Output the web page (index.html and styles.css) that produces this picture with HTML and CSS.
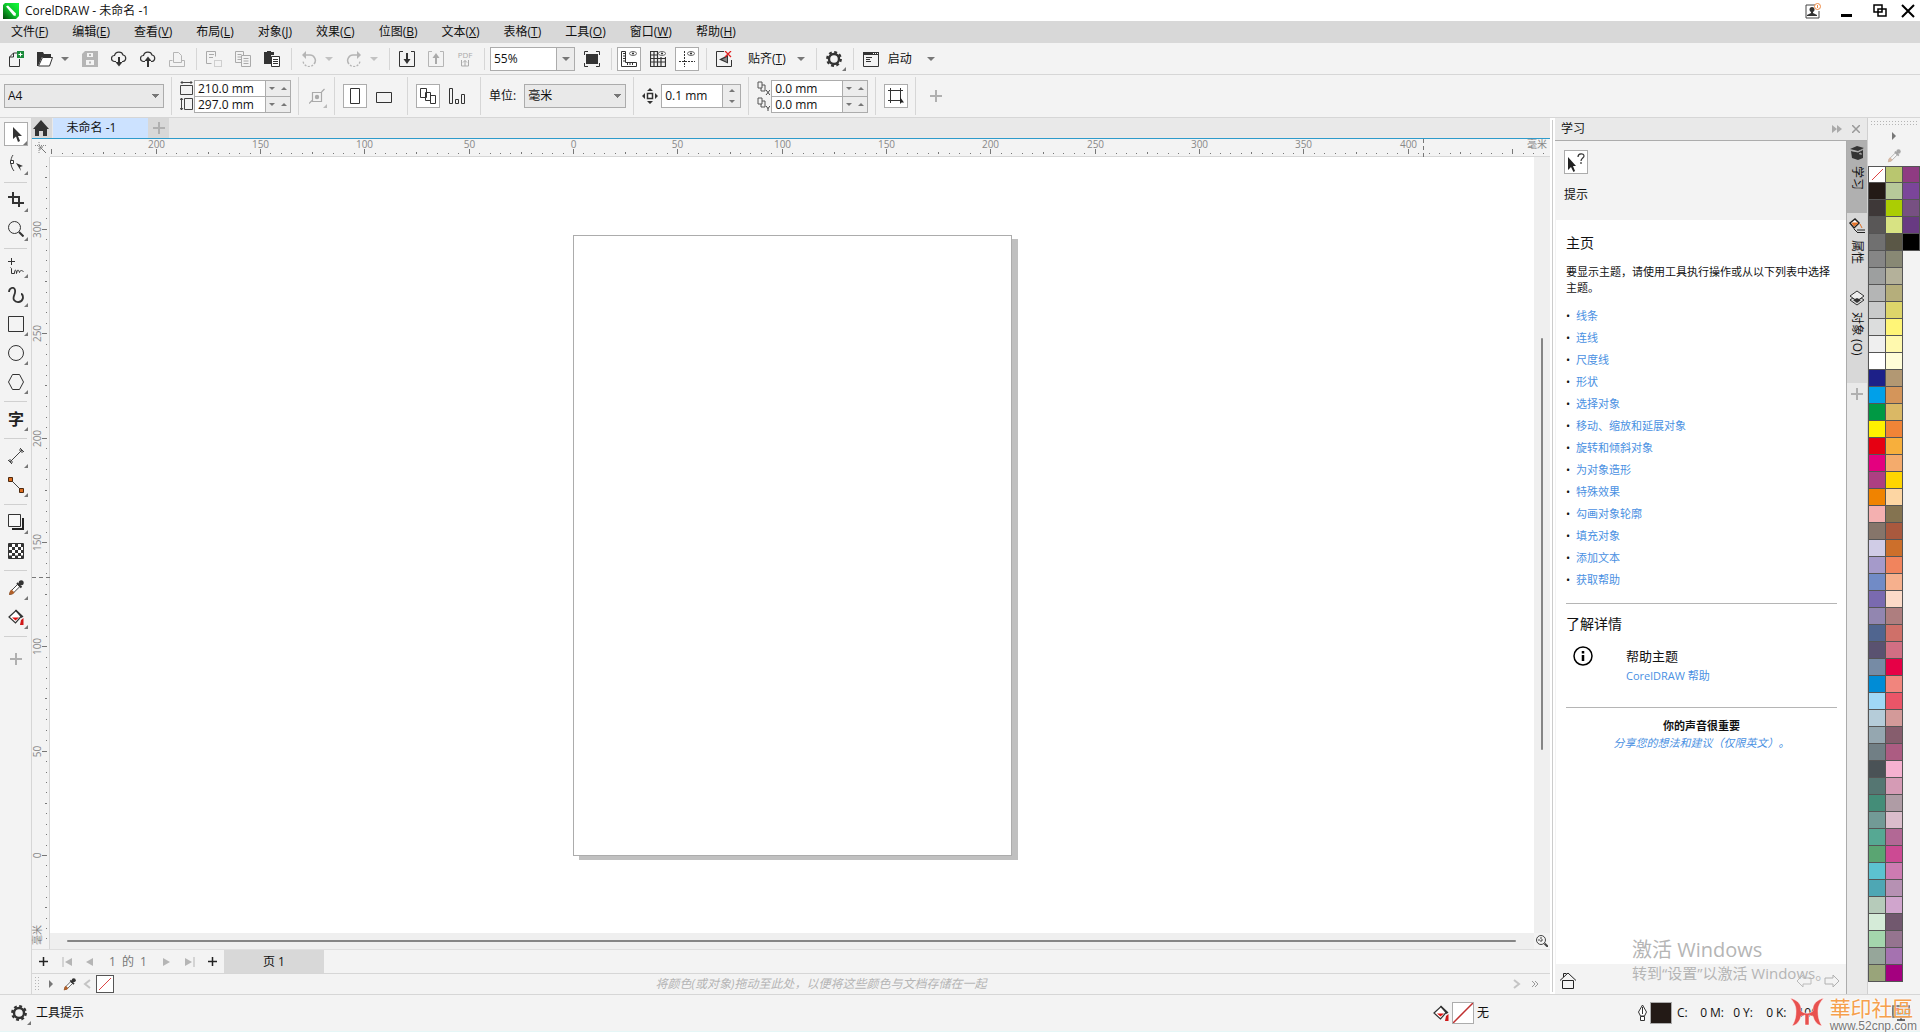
FILE: index.html
```html
<!DOCTYPE html>
<html lang="zh-CN">
<head>
  <meta charset="UTF-8">
  <title>CorelDRAW - 未命名 -1</title>
  <link rel="stylesheet" href="styles.css">
</head>
<body>

  <!-- shared icons -->
  <svg class="sprite" aria-hidden="true">
    <defs>
      <linearGradient id="logoFill" x1="1" y1="0" x2="0" y2="1">
        <stop offset="0" stop-color="#10ff3a"/><stop offset=".5" stop-color="#0fc22c"/><stop offset="1" stop-color="#02470c"/>
      </linearGradient>
      <symbol id="i-down" viewBox="0 0 8 4"><path d="M0 0h8L4 4z" fill="currentColor"/></symbol>
      <symbol id="i-up" viewBox="0 0 8 4"><path d="M0 4h8L4 0z" fill="currentColor"/></symbol>
      <symbol id="i-play" viewBox="0 0 8 10"><path d="M0 0l8 5-8 5z" fill="currentColor"/></symbol>
      <symbol id="i-plus" viewBox="0 0 12 12"><path d="M6 0v12M0 6h12" stroke="currentColor" stroke-width="2"/></symbol>
      <symbol id="i-gear" viewBox="0 0 16 16">
        <circle cx="8" cy="8" r="5" fill="none" stroke="#333" stroke-width="2.4"/>
        <circle cx="8" cy="8" r="6.8" fill="none" stroke="#333" stroke-width="2.2" stroke-dasharray="2.9 2.44"/>
      </symbol>
      <symbol id="i-bucket" viewBox="0 0 16 16">
        <path d="M1 8l7-6.500 5.500 5.500-6 7z" fill="#fff" stroke="#333" stroke-width="1.200"/>
        <path d="M7 1.500l1-1 7.500 7-2 1.500z" fill="#333"/>
        <path d="M4 8.500h7l-3.500 3z" fill="#e01010"/><path d="M13 11l2.500-2V16h-3.500z" fill="#d01818"/>
      </symbol>
      <symbol id="i-dropper" viewBox="0 0 16 16">
        <path d="M1.500 14.500l1-3 7-7 2.200 2.200-7 7z" fill="#fff" stroke="#444"/>
        <path d="M1 15l1-4 1.500-1.500 3 3L5 14z" fill="#b0602a"/>
        <path d="M9 3l4.500 4.500M11 5l2.500-2.500" stroke="#333" stroke-width="2"/><circle cx="13.200" cy="2.800" r="2.500" fill="#333"/>
      </symbol>
      <symbol id="i-eye" viewBox="0 0 8 5"><ellipse cx="4" cy="2.500" rx="3.500" ry="2" fill="#fff" stroke="#444" stroke-width=".8"/><circle cx="4" cy="2.500" r="1.100" fill="#333"/></symbol>
      <symbol id="i-duplicate" viewBox="0 0 13 13"><path d="M1 1h4v6H1zM5 4h3v6H4V7" fill="none" stroke="#555"/></symbol>
    </defs>
  </svg>

  <header class="titlebar">
    <svg class="logo" viewBox="0 0 16 16"><path d="M2 0h14v13l-3 3H0V2z" fill="url(#logoFill)"/><path d="M3 3.500l2-1 8 8-.5 2.500-2-.5z" fill="#fff"/></svg>
    <h1>CorelDRAW - 未命名 -1</h1>
    <div class="window-buttons">
      <button aria-label="帐户"><svg width="16" height="16"><path d="M1 2h9M1 2v13h13V8" fill="none" stroke="#444"/><circle cx="7" cy="6.500" r="2.500" fill="#333"/><path d="M6 8h2v2l4 2v1H2v-1l4-2z" fill="#333"/><circle cx="12.500" cy="3.500" r="3" fill="#fff" stroke="#ee8a45"/><path d="M12.500 2v3" stroke="#ee8a45"/></svg></button>
      <button aria-label="最小化"><svg width="12" height="14"><path d="M0 10h11v3H0z"/></svg></button>
      <button aria-label="还原"><svg width="14" height="14"><path d="M1 1h8v7H1zM5 5h8v7H5z" fill="#fff" stroke="#000" stroke-width="1.500"/></svg></button>
      <button class="close" aria-label="关闭"><svg width="14" height="14"><path d="M1 1l12 12M13 1L1 13" stroke="#000" stroke-width="2"/></svg></button>
    </div>
  </header>

  <nav class="menubar">
    <button>文件(<u>F</u>)</button>
    <button>编辑(<u>E</u>)</button>
    <button>查看(<u>V</u>)</button>
    <button>布局(<u>L</u>)</button>
    <button>对象(<u>J</u>)</button>
    <button>效果(<u>C</u>)</button>
    <button>位图(<u>B</u>)</button>
    <button>文本(<u>X</u>)</button>
    <button>表格(<u>T</u>)</button>
    <button>工具(<u>O</u>)</button>
    <button>窗口(<u>W</u>)</button>
    <button>帮助(<u>H</u>)</button>
  </nav>

  <div class="toolbar">
    <button class="tool" aria-label="新建"><svg viewBox="0 0 16 16"><path d="M9.500 2H5.500L1.500 6v9.500h10V8M5.500 2v4h-4" fill="none" stroke="#333"/><path d="M9 0h7v7H9z" fill="#1a8a3a"/><path d="M12.500 1.500v4M10.500 3.500h4" stroke="#fff"/></svg></button>
    <div class="split">
      <button class="tool" aria-label="打开"><svg viewBox="0 0 16 16"><path d="M0 1h6l1 2h7v3H5L1 15H0z" fill="#333"/><path d="M5.500 6.500h10l-3 8.500h-11z" fill="#fff" stroke="#333"/></svg></button>
      <button class="caret" aria-label="最近文件"><svg><use href="#i-down"/></svg></button>
    </div>
    <button class="tool" aria-label="保存" disabled><svg viewBox="0 0 16 16"><path d="M0 3l3-3h13v16H0z" fill="#b5b5b5"/><path d="M5 2h6v4H5zM4 9h8v5H4z" fill="#f3f3f3"/><path d="M8 3v2M8 10.500v2" stroke="#b5b5b5" stroke-width="2"/></svg></button>
    <button class="tool" aria-label="从云端下载"><svg viewBox="0 0 16 16"><path d="M5 10.500H3.500a3 3 0 010-6C4.500 0 11 0 12 4a3.300 3.300 0 010 6.500h-1" fill="none" stroke="#333" stroke-width="1.200"/><path d="M8 6v6" stroke="#333" stroke-width="2"/><path d="M4.500 11h7L8 15.500z" fill="#333"/></svg></button>
    <button class="tool" aria-label="上传到云端"><svg viewBox="0 0 16 16"><path d="M5 10.500H3.500a3 3 0 010-6C4.500 0 11 0 12 4a3.300 3.300 0 010 6.500h-1" fill="none" stroke="#333" stroke-width="1.200"/><path d="M8 9v7" stroke="#333" stroke-width="2"/><path d="M4.500 10h7L8 5.500z" fill="#333"/></svg></button>
    <button class="tool" aria-label="打印" disabled><svg viewBox="0 0 16 16"><path d="M3.500 9.500H.5v6h15v-6h-3M4.500 11.500v-10h5l3 3v7z" fill="none" stroke="#b5b5b5"/></svg></button>
    <span class="sep"></span>
    <button class="tool" aria-label="剪切" disabled><svg viewBox="0 0 16 16"><path d="M.5 .5h9v5M.5 .5v12h5M3 3.500h5M3 6.500h4" fill="none" stroke="#aaa"/><path d="M8.500 9.500h7v6h-7z" fill="none" stroke="#aaa" stroke-dasharray="1 1"/></svg></button>
    <button class="tool" aria-label="复制" disabled><svg viewBox="0 0 16 16"><path d="M6 11.500H.5V.5h8V4M2.500 3.500h4M2.500 6h4M2.500 8.500h4M6.500 4.500h9v11h-9zM8.500 7.500h5M8.500 10h5M8.500 12.500h5" fill="none" stroke="#aaa"/></svg></button>
    <button class="tool" aria-label="粘贴"><svg viewBox="0 0 16 16"><path d="M0 1h3V0h4v1h3v3H7v9H0z" fill="#333"/><path d="M7.500 5.500h8v10h-8z" fill="#fff" stroke="#333"/><path d="M9 8.500h5M9 10.500h5M9 12.500h5" stroke="#333"/></svg></button>
    <span class="sep"></span>
    <div class="split">
      <button class="tool" aria-label="撤消" disabled><svg viewBox="0 0 16 16"><path d="M3 4h5a5.500 5.500 0 015 9" fill="none" stroke="#b5b5b5" stroke-width="1.500"/><path d="M5 0v8L1 4z" fill="#b5b5b5"/><path d="M12 14a6 6 0 01-10-4" fill="none" stroke="#b5b5b5" stroke-width="1.300" stroke-dasharray="2 1.500"/></svg></button>
      <button class="caret" aria-label="撤消列表" disabled><svg><use href="#i-down"/></svg></button>
    </div>
    <div class="split">
      <button class="tool" aria-label="重做" disabled><svg viewBox="0 0 16 16"><path d="M13 4H8a5.500 5.500 0 00-5 9" fill="none" stroke="#b5b5b5" stroke-width="1.500"/><path d="M11 0v8l4-4z" fill="#b5b5b5"/><path d="M4 14a6 6 0 0010-4" fill="none" stroke="#b5b5b5" stroke-width="1.300" stroke-dasharray="2 1.500"/></svg></button>
      <button class="caret" aria-label="重做列表" disabled><svg><use href="#i-down"/></svg></button>
    </div>
    <span class="sep"></span>
    <button class="tool" aria-label="导入"><svg viewBox="0 0 16 16"><path d="M4 .5H.5v15h15V.5H12" fill="none" stroke="#333"/><path d="M8 2v7" stroke="#333" stroke-width="2"/><path d="M4.500 8h7L8 13z" fill="#333"/></svg></button>
    <button class="tool" aria-label="导出" disabled><svg viewBox="0 0 16 16"><path d="M4 .5H.5v15h15V.5H12" fill="none" stroke="#b5b5b5"/><path d="M8 6v7" stroke="#aaa" stroke-width="2"/><path d="M4.500 7h7L8 2z" fill="#aaa"/></svg></button>
    <button class="tool tool-pdf" aria-label="发布为 PDF" disabled><span>PDF</span><svg viewBox="0 0 16 8"><path d="M4.500 1v6h7V1M8 7V1.500M6 3.500l2-2 2 2" fill="none" stroke="#aaa"/></svg></button>
    <span class="sep"></span>
    <div class="combo zoom-level">
      <input type="text" value="55%" aria-label="缩放级别">
      <button aria-label="选择缩放级别"><svg><use href="#i-down"/></svg></button>
    </div>
    <button class="tool" aria-label="全屏预览"><svg viewBox="0 0 16 16"><path d="M2 3h12v10H2z" fill="#333"/><path d="M.5 4V.5H4M12 .5h3.500V4M15.500 12v3.500H12M4 15.500H.5V12" fill="none" stroke="#333"/></svg></button>
    <span class="sep"></span>
    <button class="tool on" aria-label="显示标尺"><svg viewBox="0 0 16 16"><path d="M.5 .5h4v11h11v4H.5z" fill="#fff" stroke="#333"/><path d="M2 2.500h2M2 5h2M2 7.500h2M2 10h2M6.500 12v2M9 12v2M11.500 12v2" stroke="#333"/><use href="#i-eye" x="8" y="0" width="8" height="5"/></svg></button>
    <button class="tool" aria-label="显示网格"><svg viewBox="0 0 16 16"><path d="M.5 0v16M4 0v16M7.500 0v16M11 6v10M15.500 6v10M0 .5h8M0 4h8M0 7.500h16M0 11h16M0 15.500h16" stroke="#333" stroke-width="1.200"/><use href="#i-eye" x="8" y="0" width="8" height="5"/></svg></button>
    <button class="tool on" aria-label="显示辅助线"><svg viewBox="0 0 16 16"><path d="M5.500 0v16M0 10.500h16" stroke="#333" stroke-dasharray="2 1"/><use href="#i-eye" x="8" y="0" width="8" height="5"/></svg></button>
    <span class="sep"></span>
    <button class="tool" aria-label="贴齐关闭"><svg viewBox="0 0 16 16"><path d="M8 .5H.5v15h15V9" fill="none" stroke="#333"/><path d="M12 4L3 8.500l9 4z" fill="#333"/><path d="M6 8.500l5-2.500v5z" fill="#888"/><path d="M9 0l6 6M15 0L9 6" stroke="#e02020" stroke-width="1.300"/></svg></button>
    <div class="split">
      <button class="text-button">贴齐(<u>T</u>)</button>
      <button class="caret" aria-label="贴齐选项"><svg><use href="#i-down"/></svg></button>
    </div>
    <span class="sep"></span>
    <button class="tool flyout" aria-label="选项"><svg><use href="#i-gear"/></svg></button>
    <span class="sep"></span>
    <button class="tool" aria-label="启动图标"><svg viewBox="0 0 16 16"><path d="M.5 1.500h15v14H.5z" fill="none" stroke="#333"/><path d="M0 1h16v3H0z" fill="#333"/><path d="M10 2.500h1M12 2.500h1M14 2.500h1" stroke="#fff"/><path d="M3 6.500h6M3 8.500h4M3 10.500h5" stroke="#333"/></svg></button>
    <div class="split launch">
      <button>启动</button>
      <button class="caret" aria-label="应用程序启动器"><svg><use href="#i-down"/></svg></button>
    </div>
  </div>

  <div class="toolbar property-bar">
    <select class="page-size" aria-label="页面大小"><option>A4</option></select>
    <span class="sep"></span>
    <div class="pair">
      <div class="pair-icons">
        <svg width="13" height="16"><path d="M.5 5.500h12v9H.5zM1 2.500h11M2.500 1L1 2.500 2.500 4M10.500 1L12 2.500 10.500 4" fill="none" stroke="#444"/></svg>
        <svg width="13" height="16"><path d="M4.500 2.500h8v11h-8zM1.500 2v12M0 4l1.500-2L3 4M0 12l1.500 2L3 12" fill="none" stroke="#444"/></svg>
      </div>
      <div class="pair-fields">
        <div class="combo"><input type="text" value="210.0 mm" aria-label="页面宽度"><button aria-label="减小宽度"><svg><use href="#i-down"/></svg></button><button aria-label="增大宽度"><svg><use href="#i-up"/></svg></button></div>
        <div class="combo"><input type="text" value="297.0 mm" aria-label="页面高度"><button aria-label="减小高度"><svg><use href="#i-down"/></svg></button><button aria-label="增大高度"><svg><use href="#i-up"/></svg></button></div>
      </div>
    </div>
    <span class="sep"></span>
    <button class="tool narrow flyout" aria-label="自动适合页面" disabled><svg viewBox="0 0 16 16"><path d="M3.500 4.500h9v9h-9zM0 15.500l3-3M12.500 4l3-3" fill="none" stroke="#aaa" stroke-width="1.200"/><circle cx="8" cy="9" r="2.200" fill="#aaa"/></svg></button>
    <span class="sep"></span>
    <div class="group">
      <button class="tool on" aria-label="纵向"><svg viewBox="0 0 16 16"><path d="M3.500 .5h9v15h-9z" fill="#fff" stroke="#333"/></svg></button>
      <button class="tool" aria-label="横向"><svg viewBox="0 0 16 16"><path d="M.5 4.500h15v10H.5z" fill="none" stroke="#333"/></svg></button>
    </div>
    <span class="sep"></span>
    <div class="group">
      <button class="tool on" aria-label="所有页面"><svg viewBox="0 0 16 16"><path d="M.5 .5h6v9h-6zM5.500 4.500h5v8h-5zM10.500 7.500h5v8h-5z" fill="#fff" stroke="#333"/></svg></button>
      <button class="tool" aria-label="当前页面"><svg viewBox="0 0 16 16"><path d="M.5 .5h3v15h-3zM6.500 11.500h3v4h-3zM12.500 6.500h3v9h-3z" fill="none" stroke="#333"/></svg></button>
    </div>
    <span class="sep"></span>
    <label class="unit-label" for="units">单位:</label>
    <select class="units" id="units"><option>毫米</option></select>
    <span class="sep"></span>
    <div class="nudge">
      <svg width="16" height="16"><path d="M5.500 5.500h5v5h-5z" fill="#fff" stroke="#333" stroke-width="1.500"/><path d="M8 0l3 3H5zM8 16l3-3H5zM0 8l3-3v6zM16 8l-3-3v6z" fill="#333"/></svg>
      <div class="combo">
        <input type="text" value="0.1 mm" aria-label="微调距离">
        <div class="stack"><button aria-label="增大微调"><svg><use href="#i-up"/></svg></button><button aria-label="减小微调"><svg><use href="#i-down"/></svg></button></div>
      </div>
    </div>
    <span class="sep"></span>
    <div class="pair">
      <div class="pair-icons">
        <svg width="13" height="16"><use href="#i-duplicate" y="1" width="13" height="13"/><path d="M9 10l4 5M13 10l-4 5" stroke="#444"/></svg>
        <svg width="13" height="16"><use href="#i-duplicate" y="1" width="13" height="13"/><path d="M9 10l2 2.500 2-2.500M11 12v3" fill="none" stroke="#444"/></svg>
      </div>
      <div class="pair-fields">
        <div class="combo"><input type="text" value="0.0 mm" aria-label="再制距离 X"><button aria-label="减小 X"><svg><use href="#i-down"/></svg></button><button aria-label="增大 X"><svg><use href="#i-up"/></svg></button></div>
        <div class="combo"><input type="text" value="0.0 mm" aria-label="再制距离 Y"><button aria-label="减小 Y"><svg><use href="#i-down"/></svg></button><button aria-label="增大 Y"><svg><use href="#i-up"/></svg></button></div>
      </div>
    </div>
    <span class="sep"></span>
    <button class="tool on" aria-label="视为已填充"><svg viewBox="0 0 16 16"><path d="M2.500 2.500h10v10h-10z" fill="none" stroke="#333"/><path d="M0 2.500h3M2.500 0v3M12 2.500h3M12.500 0v3M0 12.500h3M2.500 12v3" stroke="#333"/><path d="M12 9v7l1.500-1.500H16z" fill="#222"/></svg></button>
    <span class="sep"></span>
    <button class="tool add" aria-label="自定义"><svg><use href="#i-plus"/></svg></button>
  </div>

  <main class="workspace">
    <aside class="toolbox">
      <button class="tool on flyout" aria-label="选择"><svg viewBox="0 0 16 16"><path d="M5 1v12l3-2.500L10 16l2-1-2-5h4z" fill="#333"/></svg></button>
      <button class="tool flyout" aria-label="形状"><svg viewBox="0 0 16 16"><path d="M5 0C2 4 2 11 6 16" fill="none" stroke="#444"/><path d="M2.500 5.500h3v3h-3z" fill="#fff" stroke="#333"/><path d="M8 8l7 3-3 1 1 4z" fill="#333"/></svg></button>
      <span class="sep"></span>
      <button class="tool flyout" aria-label="裁剪"><svg viewBox="0 0 16 16"><path d="M0 5h11v10M5 0v11h11" fill="none" stroke="#333" stroke-width="2"/></svg></button>
      <button class="tool flyout" aria-label="缩放"><svg viewBox="0 0 16 16"><circle cx="6.500" cy="6.500" r="6" fill="none" stroke="#333"/><path d="M11 11l4.500 4.500" stroke="#333" stroke-width="2"/></svg></button>
      <span class="sep"></span>
      <button class="tool flyout" aria-label="手绘"><svg viewBox="0 0 16 16"><path d="M3.500 0v7M0 3.500h7M2.500 9.500l1 1v5h3c0-5 2-4 2 0 1-5 2-4 3-1 1-3 2-2 4-1" fill="none" stroke="#333"/></svg></button>
      <button class="tool flyout" aria-label="艺术笔"><svg viewBox="0 0 16 16"><path d="M1 5C1 1 6-1 7 3s-3 7-1 10 8 3 9-2c0-3-1-4-2-4" fill="none" stroke="#333" stroke-width="1.800"/></svg></button>
      <button class="tool flyout" aria-label="矩形"><svg viewBox="0 0 16 16"><path d="M.5 .5h15v15H.5z" fill="none" stroke="#333"/></svg></button>
      <button class="tool flyout" aria-label="椭圆形"><svg viewBox="0 0 16 16"><circle cx="8" cy="8" r="7.500" fill="none" stroke="#333"/></svg></button>
      <button class="tool flyout" aria-label="多边形"><svg viewBox="0 0 16 16"><path d="M4.500 .5h7l4 7.500-4 7.500h-7L.5 8z" fill="none" stroke="#333"/></svg></button>
      <span class="sep"></span>
      <button class="tool flyout glyph" aria-label="文本">字</button>
      <span class="sep"></span>
      <button class="tool flyout" aria-label="平行度量"><svg viewBox="0 0 16 16"><path d="M2 14L14 2M0 12l4 4M12 0l4 4M2 11v3h3M11 2h3v3" fill="none" stroke="#444"/></svg></button>
      <button class="tool flyout" aria-label="连接器"><svg viewBox="0 0 16 16"><path d="M3 3l10 10" stroke="#444"/><path d="M.5 .5h4v4h-4zM11.500 11.500h4v4h-4z" fill="#dc6c1e" stroke="#4c2a10"/></svg></button>
      <span class="sep"></span>
      <button class="tool flyout" aria-label="阴影"><svg viewBox="0 0 16 16"><path d="M15 4v11H4" fill="none" stroke="#222" stroke-width="2"/><path d="M.5 .5h12v12H.5z" fill="#f8f8f8" stroke="#333"/></svg></button>
      <button class="tool" aria-label="透明度"><svg viewBox="0 0 16 16"><path d="M.5 .5h15v15H.5z" fill="#fff" stroke="#333"/><path d="M1 2.500h14M1 8.500h14M1 14h14" stroke="#333" stroke-width="3" stroke-dasharray="3 3"/><path d="M4 5.500h12M4 11.500h12" stroke="#333" stroke-width="3" stroke-dasharray="3 3"/></svg></button>
      <span class="sep"></span>
      <button class="tool flyout" aria-label="颜色滴管"><svg><use href="#i-dropper"/></svg></button>
      <button class="tool flyout" aria-label="交互式填充"><svg><use href="#i-bucket"/></svg></button>
      <span class="sep"></span>
      <button class="tool add" aria-label="添加工具"><svg><use href="#i-plus"/></svg></button>
    </aside>

    <section class="document">
      <div class="tabs">
        <button class="tab-home" aria-label="欢迎屏幕"><svg width="16" height="16"><path d="M8 0l8 9h-2v7H10v-5H6v5H2V9H0z" fill="#333"/></svg></button>
        <button class="tab-doc">未命名 -1</button>
        <button class="tab-add" aria-label="新建文档"><svg><use href="#i-plus"/></svg></button>
      </div>
      <div class="view">
        <div class="corner"><svg width="12" height="12"><path d="M4 0v12M0 3.500h12" stroke="#888" stroke-dasharray="1 1"/><path d="M5 5l6 6M5 8V5h3" fill="none" stroke="#777"/></svg></div>
        <svg class="ruler-x" id="rulerX"></svg>
        <svg class="ruler-y" id="rulerY"></svg>
        <div class="canvas"><div class="page"></div></div>
        <div class="scroll-y"><div class="thumb"></div></div>
        <div class="scroll-x"><div class="thumb"></div></div>
        <button class="navigator" aria-label="导航器"><svg width="12" height="12"><circle cx="5" cy="5" r="4.500" fill="none" stroke="#444"/><path d="M5 2v6M2 5h6" stroke="#444" stroke-dasharray="2 1"/><path d="M8.500 8.500L12 12" stroke="#444" stroke-width="2"/></svg></button>
      </div>
      <div class="page-nav">
        <button aria-label="在前添加页面"><svg class="dark" width="9" height="9" viewBox="0 0 12 12"><use href="#i-plus"/></svg></button>
        <button aria-label="第一页" disabled><svg width="10" height="10"><path d="M1 0v10" stroke="currentColor"/><path d="M10 1v8L3 5z" fill="currentColor"/></svg></button>
        <button aria-label="上一页" disabled><svg width="7" height="10"><path d="M7 1v8L0 5z" fill="currentColor"/></svg></button>
        <span class="page-count"><span>1</span><span>的</span><span>1</span></span>
        <button aria-label="下一页" disabled><svg width="7" height="10"><path d="M0 1v8l7-4z" fill="currentColor"/></svg></button>
        <button aria-label="最后一页" disabled><svg width="10" height="10"><path d="M9 0v10" stroke="currentColor"/><path d="M0 1v8l7-4z" fill="currentColor"/></svg></button>
        <button aria-label="在后添加页面"><svg class="dark" width="9" height="9" viewBox="0 0 12 12"><use href="#i-plus"/></svg></button>
        <button class="page-tab">页 1</button>
      </div>
      <div class="doc-palette">
        <span class="grip"></span>
        <button aria-label="文档调色板菜单"><svg class="mid" width="5" height="8"><path d="M0 0l4 4-4 4z" fill="currentColor"/></svg></button>
        <button aria-label="滴管"><svg width="13" height="13"><use href="#i-dropper"/></svg></button>
        <button aria-label="向左滚动"><svg width="8" height="10"><path d="M7 1L2 5l5 4" fill="none" stroke="#c4c4c4" stroke-width="2"/></svg></button>
        <button class="no-color" aria-label="无颜色"><svg width="16" height="16"><path d="M2 14L14 2" stroke="#d44"/></svg></button>
        <em>将颜色(或对象)拖动至此处，以便将这些颜色与文档存储在一起</em>
        <button aria-label="向右滚动"><svg width="8" height="10"><path d="M1 1l5 4-5 4" fill="none" stroke="#c4c4c4" stroke-width="2"/></svg></button>
        <button aria-label="展开"><svg width="8" height="8"><path d="M1 1l3 3-3 3M4 1l3 3-3 3" fill="none" stroke="#999"/></svg></button>
      </div>
    </section>

    <aside class="docker">
      <div class="docker-head">
        <h2>学习</h2>
        <button aria-label="折叠"><svg width="10" height="8"><path d="M0 0l5 4-5 4zM5 0l5 4-5 4z" fill="#aaa"/></svg></button>
        <button aria-label="关闭泊坞窗"><svg width="8" height="8"><path d="M0 0l8 8M8 0L0 8" stroke="#999" stroke-width="1.500"/></svg></button>
      </div>
      <div class="docker-body">
        <div class="docker-content">
          <div class="hints">
            <button class="tool on" aria-label="提示"><svg viewBox="0 0 20 20"><path d="M2 5v13l3-3 2.500 5 1.500-1-2-5h3z" fill="#222"/><path d="M12 5c0-4 6-4 6-1 0 2-3 2-3 5M15 10v2" fill="none" stroke="#333" stroke-width="1.200"/></svg></button>
            <p>提示</p>
          </div>
          <article class="lesson">
            <h3>主页</h3>
            <p>要显示主题，请使用工具执行操作或从以下列表中选择主题。</p>
            <ul>
              <li><a href="#">线条</a></li>
              <li><a href="#">连线</a></li>
              <li><a href="#">尺度线</a></li>
              <li><a href="#">形状</a></li>
              <li><a href="#">选择对象</a></li>
              <li><a href="#">移动、缩放和延展对象</a></li>
              <li><a href="#">旋转和倾斜对象</a></li>
              <li><a href="#">为对象造形</a></li>
              <li><a href="#">特殊效果</a></li>
              <li><a href="#">勾画对象轮廓</a></li>
              <li><a href="#">填充对象</a></li>
              <li><a href="#">添加文本</a></li>
              <li><a href="#">获取帮助</a></li>
            </ul>
            <section class="more">
              <h3>了解详情</h3>
              <div class="help">
                <svg width="20" height="20"><circle cx="10" cy="10" r="9" fill="none" stroke="#000" stroke-width="1.500"/><path d="M10 5v2.500M10 9v6" stroke="#000" stroke-width="2.500"/></svg>
                <div>
                  <h4>帮助主题</h4>
                  <a href="#">CorelDRAW 帮助</a>
                </div>
              </div>
            </section>
            <section class="voice">
              <strong>你的声音很重要</strong>
              <a href="#">分享您的想法和建议（仅限英文）。</a>
            </section>
          </article>
          <div class="docker-foot">
            <button aria-label="主页"><svg width="16" height="18"><path d="M2.500 8.500h11v8h-11zM0 8.500L8 1l8 7.500M3.500 5V1.500h3" fill="none" stroke="#222"/></svg></button>
            <button aria-label="后退"><svg width="16" height="14"><path d="M1 7l6-6v3h8v6H7v3z" fill="none" stroke="#bbb"/></svg></button>
            <button aria-label="前进"><svg width="16" height="14"><path d="M15 7L9 1v3H1v6h8v3z" fill="none" stroke="#b0b0b0"/></svg></button>
          </div>
        </div>
        <div class="docker-tabs">
          <button class="active"><svg width="14" height="14"><path d="M0 3l7-3 7 2-6 3zM1 5l7 1 5-3v9l-5 2-6-2z" fill="#333"/><path d="M1 4.500l7 1.500 6-3M9 8l2-1v2" fill="none" stroke="#b0b0b0"/></svg><span>学习</span></button>
          <button><svg width="16" height="16"><path d="M1 5l5-4 4 4-5 5z" fill="#fff" stroke="#222" stroke-width="1.500"/><path d="M3 5h6l-4 3zM11 6l2 4" fill="#e2722a" stroke="#e2722a"/><path d="M5 11l3 3M8 12h8M8 14.500h8" stroke="#222"/></svg><span>属性</span></button>
          <button><svg width="16" height="16"><path d="M8 5l7 5-7 5-7-5z" fill="none" stroke="#333"/><path d="M8 1l7 5-7 5-7-5z" fill="#eee" stroke="#333"/><path d="M4 10l4-2 4 2-4 3z" fill="#333"/></svg><span>对象 (O)</span></button>
          <button class="add" aria-label="添加泊坞窗"><svg width="11" height="11" viewBox="0 0 12 12"><use href="#i-plus"/></svg></button>
        </div>
      </div>
      <p class="activate"><span>激活 Windows</span><br>转到“设置”以激活 Windows。</p>
    </aside>

    <aside class="palette">
      <span class="grip"></span>
      <button aria-label="调色板菜单"><svg class="mid" width="4" height="8"><path d="M0 0l4 4-4 4z" fill="currentColor"/></svg></button>
      <button class="faded" aria-label="滴管"><svg width="14" height="14"><use href="#i-dropper"/></svg></button>
      <div class="swatches" id="swatches"></div>
    </aside>
  </main>

  <footer class="statusbar">
    <button class="tool flyout" aria-label="状态栏选项"><svg><use href="#i-gear"/></svg></button>
    <span class="hint">工具提示</span>
    <div class="fill-info">
      <svg width="16" height="16"><use href="#i-bucket"/></svg>
      <svg class="chip" width="22" height="22"><path d="M0 20L20 0" stroke="#c03030" stroke-width="1.500"/></svg>
      <span>无</span>
    </div>
    <div class="outline-info">
      <svg width="9" height="16"><path d="M4.500 0l4 7-2 4h-4l-2-4zM2.500 11.500h4v4h-4zM4.500 2v7" fill="#fff" stroke="#333"/></svg>
      <span class="chip chip-dark"></span>
      <dl>
        <div><dt>C:</dt><dd>0</dd></div>
        <div><dt>M:</dt><dd>0</dd></div>
        <div><dt>Y:</dt><dd>0</dd></div>
        <div><dt>K:</dt><dd>100</dd></div>
      </dl>
    </div>
    <button class="proof" aria-label="校样颜色"><svg width="18" height="16"><path d="M1 1h16v11H1zM5 15h8M9 12v3" fill="#cfd8df" stroke="#333" stroke-width="1.500"/><path d="M3 3h4v3H3z" fill="#d22"/><path d="M3 7h6v3H3z" fill="#2a8acb"/><path d="M11 6h4v4h-4z" fill="#35b5e0"/></svg></button>
    <div class="watermark">
      <svg width="36" height="32"><path d="M1 1c8 2 12 7 11 13 4 3 8 3 12 0C23 8 27 3 35 1c-4 4-6 8-6 13 0 6 1 10 4 15-5-1-8-5-9-10h-2l-2-1v10h-4V18l-2 1h-2c-1 5-4 9-9 10 3-5 4-9 4-15C7 9 5 5 1 1z" fill="#e8514f" stroke="#fff" stroke-width=".5"/></svg>
      <div>
        <p>華印社區</p>
        <small>www.52cnp.com</small>
      </div>
    </div>
  </footer>

  <script src="script.js"></script>
</body>
</html>
```

FILE: styles.css
```css
* {
  box-sizing: border-box;
}

body {
  margin: 0;
  height: 100vh;
  display: flex;
  flex-direction: column;
  overflow: hidden;
  background-color: #f3f3f3;
  color: #111;
  font-family: "Open Sans", "Noto Sans CJK SC", sans-serif;
  font-size: 12px;
  line-height: 16px;
  text-spacing-trim: space-all;
}

h1, h2, h3, h4, p, ul, dl, dd {
  margin: 0;
  padding: 0;
  font-size: inherit;
  font-weight: normal;
}

button, input, select {
  margin: 0;
  padding: 0;
  border: none;
  border-radius: 0;
  background: none;
  color: inherit;
  font: inherit;
}

button {
  display: flex;
  align-items: center;
  justify-content: center;
  white-space: nowrap;
}

a {
  color: #4a90e2;
  text-decoration: none;
}

svg {
  display: block;
  flex-shrink: 0;
}

.sprite {
  position: absolute;
  width: 0;
  height: 0;
}

/* title and menus */
.titlebar {
  display: flex;
  align-items: center;
  height: 21px;
  padding: 0 5px 0 3px;
  background-color: #fff;
}

.logo {
  width: 16px;
  height: 16px;
  margin-right: 6px;
}

.window-buttons {
  display: flex;
  align-items: center;
  gap: 20px;
  margin-left: auto;
}

.close {
  margin-left: -6px;
}

.menubar {
  display: flex;
  align-items: center;
  gap: 24px;
  height: 22px;
  padding: 0 11px;
  background-color: #d8d8d8;
}

/* toolbars */
.toolbar {
  display: flex;
  align-items: center;
  gap: 5px;
  height: 32px;
  padding-left: 4px;
  border-bottom: 1px solid #d6d6d6;
}

.toolbar .sep {
  width: 3px;
  height: 22px;
  border-right: 1px solid #d6d6d6;
}

.tool {
  position: relative;
  flex-shrink: 0;
  width: 24px;
  height: 24px;
}

.tool svg {
  width: 16px;
  height: 16px;
}

.tool.on {
  border: 1px solid #acacac;
  background-color: #fff;
}

.tool.narrow {
  width: 20px;
}

.flyout::after {
  content: "";
  position: absolute;
  right: 0;
  bottom: 0;
  border: 2px solid transparent;
  border-right-color: #777;
  border-bottom-color: #777;
}

.flyout:disabled::after {
  border-right-color: #bbb;
  border-bottom-color: #bbb;
}

.tool-pdf {
  flex-direction: column;
  color: #aaa;
  font-size: 8px;
  line-height: 8px;
}

.tool-pdf svg {
  height: 8px;
}

.split {
  display: flex;
  align-items: center;
}

.caret {
  width: 16px;
  height: 24px;
  color: #777;
}

.caret:disabled {
  color: #c2c2c2;
}

.caret svg {
  width: 8px;
  height: 4px;
}

.text-button {
  padding: 0 7px;
}

.launch {
  gap: 11px;
}

.add,
.tab-add {
  color: #b0b0b0;
}

.add svg,
.tab-add svg {
  width: 12px;
  height: 12px;
}

.combo {
  display: flex;
  border: 1px solid #acacac;
  background-color: #fff;
}

.combo input {
  flex: 1;
  min-width: 0;
  padding-left: 3px;
}

.combo button {
  width: 12px;
  background-color: #ececec;
  color: #777;
}

.combo button svg {
  width: 6px;
  height: 3px;
}

.zoom-level {
  width: 85px;
  height: 24px;
}

.zoom-level button {
  width: 18px;
  border-left: 1px solid #acacac;
}

.zoom-level button svg {
  width: 8px;
  height: 4px;
}

/* property bar */
.property-bar {
  height: 43px;
}

.property-bar .sep {
  height: 38px;
  margin-right: 3px;
}

select {
  appearance: none;
  height: 24px;
  padding-left: 3px;
  border: 1px solid #acacac;
  background-color: #e9e9e9;
  background-image: linear-gradient(to bottom left, #777 50%, transparent 50%), linear-gradient(to bottom right, #777 50%, transparent 50%);
  background-position: right 7px center, right 3px center;
  background-size: 4px 4px;
  background-repeat: no-repeat;
}

.page-size {
  width: 160px;
}

.units {
  width: 102px;
}

.unit-label {
  margin-right: 3px;
}

.pair {
  display: flex;
  gap: 1px;
  padding-top: 1px;
}

.pair-fields {
  width: 97px;
}

.pair-fields .combo {
  height: 17px;
}

.pair-fields .combo + .combo {
  height: 16px;
  border-top: none;
}

.pair-fields input {
  border-right: 1px solid #acacac;
}

.group {
  display: flex;
  gap: 5px;
  padding-right: 4px;
}

.nudge {
  display: flex;
  align-items: center;
  gap: 3px;
}

.nudge .combo {
  width: 80px;
  height: 24px;
}

.stack {
  width: 18px;
  border-left: 1px solid #acacac;
}

.stack button {
  width: 17px;
  height: 11px;
}

/* workspace */
.workspace {
  flex: 1;
  display: flex;
  min-height: 0;
}

.toolbox {
  display: flex;
  flex-direction: column;
  gap: 5px;
  width: 32px;
  padding: 4px 3px 0 4px;
  border-right: 1px solid #d6d6d6;
}

.toolbox .sep {
  width: 23px;
  height: 3px;
  border-bottom: 1px solid #d0d0d0;
}

.toolbox .add {
  margin-top: 5px;
}

.glyph {
  color: #222;
  font-size: 16px;
  font-weight: bold;
}

.document {
  flex: 1;
  display: flex;
  flex-direction: column;
  min-width: 0;
}

.tabs {
  display: flex;
  height: 21px;
  background-color: #e9e9e9;
  border-bottom: 1px solid #2e9bcb;
}

.tab-home {
  width: 20px;
  padding-right: 2px;
  margin-right: 1px;
  background-color: #d8d8d8;
}

.tab-doc {
  width: 95px;
  padding-right: 18px;
  background-color: #cce2ff;
}

.tab-add {
  width: 21px;
  background-color: #d8d8d8;
}

.view {
  flex: 1;
  display: grid;
  grid-template-columns: 18px 1fr 16px;
  grid-template-rows: 18px 1fr 16px;
  min-height: 0;
}

.corner {
  display: flex;
  align-items: center;
  justify-content: center;
}

.ruler-x {
  grid-column: 2 / 4;
  grid-row: 1;
  width: 100%;
  height: 18px;
  overflow: visible;
  border-bottom: 1px solid #d6d6d6;
}

.ruler-y {
  grid-column: 1;
  grid-row: 2 / 4;
  width: 18px;
  height: 100%;
  overflow: visible;
  border-right: 1px solid #d6d6d6;
}

.ruler-x text,
.ruler-y text {
  fill: #888;
  font-size: 10px;
  text-anchor: middle;
}

.tick {
  stroke: #777;
  shape-rendering: crispEdges;
}

.cursor-mark {
  stroke: #777;
  stroke-dasharray: 4 3;
  shape-rendering: crispEdges;
}

.canvas {
  position: relative;
  overflow: hidden;
  background-color: #fff;
}

.page {
  position: absolute;
  left: 523px;
  top: 78px;
  width: 439px;
  height: 621px;
  border: 1px solid #acacac;
  background-color: #fff;
  box-shadow: 6px 4px 0 #c0c0c0;
}

.scroll-y {
  padding: 181px 7px 183px;
  background-color: #efefef;
}

.scroll-x {
  grid-column: 2;
  padding: 7px 18px 7px 17px;
  background-color: #efefef;
}

.thumb {
  height: 100%;
  border-radius: 1px;
  background-color: #858585;
}

.page-nav {
  display: flex;
  align-items: center;
  height: 25px;
  border-top: 1px solid #dedede;
  border-bottom: 1px solid #d6d6d6;
}

.page-nav button {
  width: 23px;
  height: 23px;
  color: #b5b5b5;
}

.page-nav .dark {
  color: #222;
}

.page-count {
  display: flex;
  justify-content: space-between;
  width: 54px;
  padding: 0 8px;
  color: #777;
}

.page-nav .page-tab {
  width: 100px;
  background-color: #d8d8d8;
  color: #111;
}

.doc-palette {
  display: flex;
  align-items: center;
  height: 20px;
  padding: 0 6px 0 2px;
}

.grip {
  width: 6px;
  height: 16px;
  background: radial-gradient(circle, #b5b5b5 1px, transparent 1px) 0 0 / 3px 3px;
}

.doc-palette button {
  width: 18px;
  height: 18px;
}

.doc-palette .grip {
  margin-right: 2px;
}

.doc-palette .no-color {
  border: 1px solid #555;
  background-color: #fff;
}

.doc-palette em {
  flex: 1;
  padding-left: 20px;
  color: #b5b5b5;
  text-align: center;
}

.mid {
  color: #777;
}

/* docker */
.docker {
  position: relative;
  display: flex;
  flex-direction: column;
  width: 317px;
  border-left: 5px solid #fff;
}

.docker::before {
  content: "";
  position: absolute;
  left: -3px;
  top: 2px;
  bottom: 2px;
  width: 1px;
  background-color: #ccc;
}

.docker-head {
  display: flex;
  align-items: center;
  gap: 10px;
  height: 23px;
  padding: 0 7px 0 6px;
  background-color: #e9e9e9;
  border-bottom: 1px solid #acacac;
}

.docker-head h2 {
  flex: 1;
}

.docker-body {
  flex: 1;
  display: flex;
  min-height: 0;
}

.docker-content {
  flex: 1;
  display: flex;
  flex-direction: column;
}

.hints {
  height: 79px;
  padding: 9px;
}

.hints .tool svg {
  width: 20px;
  height: 20px;
}

.hints p {
  margin-top: 13px;
}

.lesson {
  flex: 1;
  margin-left: 1px;
  padding: 13px 9px 0 10px;
  background-color: #fff;
  font-size: 11px;
}

.lesson h3 {
  font-size: 14px;
  line-height: 20px;
}

.lesson > p {
  margin-top: 11px;
}

.lesson ul {
  margin: 9px 0 12px;
  list-style: none;
}

.lesson li {
  height: 22px;
  line-height: 22px;
}

.lesson li::before {
  content: "•";
  display: inline-block;
  width: 10px;
}

.more,
.voice {
  border-top: 1px solid #b5b5b5;
}

.more {
  height: 104px;
  padding-top: 10px;
}

.help {
  display: flex;
  gap: 33px;
  margin-top: 12px;
  padding-left: 7px;
}

.help h4 {
  font-size: 13px;
  line-height: 20px;
}

.help a {
  line-height: 20px;
}

.voice {
  padding-top: 9px;
  text-align: center;
}

.voice strong,
.voice a {
  display: block;
  line-height: 17px;
}

.voice a {
  font-style: italic;
}

.docker-foot {
  display: flex;
  align-items: center;
  gap: 12px;
  height: 30px;
  padding: 4px 6px 0 5px;
}

.docker-foot button:first-child {
  margin-right: auto;
}

.docker-tabs {
  width: 21px;
  border-left: 1px solid #acacac;
  background-color: #e9e9e9;
}

.docker-tabs button {
  flex-direction: column;
  justify-content: flex-start;
  gap: 6px;
  width: 20px;
  height: 72px;
  padding-top: 5px;
  background-color: #d8d8d8;
}

.docker-tabs button span {
  writing-mode: vertical-rl;
  text-orientation: sideways;
}

.docker-tabs .active {
  background-color: #b0b0b0;
}

.docker-tabs button:nth-child(3) {
  height: 98px;
}

.docker-tabs .add {
  height: 22px;
  background: none;
}

.activate {
  position: absolute;
  left: 77px;
  bottom: 11px;
  color: #b5b5b5;
  font-size: 15px;
  line-height: 20px;
  white-space: nowrap;
}

.activate span {
  font-size: 20px;
  line-height: 26px;
}

/* colour palette */
.palette {
  display: flex;
  flex-direction: column;
  align-items: center;
  width: 53px;
  border-left: 1px solid #d0d0d0;
}

.palette .grip {
  width: 48px;
  height: 6px;
  margin-top: 2px;
}

.palette button {
  height: 20px;
}

.faded {
  opacity: 0.4;
}

.swatches {
  display: grid;
  grid-template-columns: repeat(3, 17px);
  grid-auto-flow: column;
  grid-template-rows: repeat(48, 17px);
  border-left: 1px solid #555;
}

.swatches .swatch {
  width: 17px;
  height: 17px;
  border: solid #555;
  border-width: 0 1px 1px 0;
}

.swatches .top {
  border-top-width: 1px;
}

/* status bar */
.statusbar {
  position: relative;
  display: flex;
  align-items: center;
  height: 38px;
  padding-left: 7px;
  border-top: 1px solid #d6d6d6;
  border-bottom: 1px solid #e6f6f6;
}

.hint {
  margin-left: 5px;
}

.fill-info,
.outline-info {
  display: flex;
  align-items: center;
  gap: 3px;
}

.fill-info {
  width: 205px;
  margin-left: auto;
}

.chip {
  width: 22px;
  height: 22px;
  border: 1px solid #acacac;
  background-color: #fff;
}

.chip-dark {
  background-color: #231a16;
}

.outline-info dl {
  display: flex;
  gap: 3px;
  margin-left: 2px;
}

.outline-info dl div {
  display: flex;
  justify-content: space-between;
  width: 30px;
}

.outline-info dl div:last-child {
  width: 42px;
}

.proof {
  margin: 0 10px 0 74px;
}

.watermark {
  position: absolute;
  right: 3px;
  top: 0;
  display: flex;
  align-items: center;
  gap: 5px;
  color: #f5a04c;
  font-size: 21px;
  line-height: 26px;
  text-shadow: 0 0 2px #fff, 0 0 3px #fff;
}

.watermark small {
  display: block;
  color: #777;
  font-family: "Liberation Sans", sans-serif;
  font-size: 12px;
  line-height: 10px;
}
```

FILE: script.js
```javascript
const SVG_NS = 'http://www.w3.org/2000/svg';
const PX_PER_MM = 2.087;
const ORIGIN_X = 523;
const ORIGIN_Y = 698;

const colors = [
  ['none', '#231a16', '#3e3838', '#595757', '#707070', '#868686', '#9d9f9f', '#b4b5b5', '#c9caca', '#dcdddd', '#efefef', '#ffffff',
   '#1d2088', '#00a0e9', '#009944', '#fff100', '#e60012', '#e4007f', '#ae3f82', '#f08300', '#f4b0b0', '#86756a', '#d0cce6', '#a59aca',
   '#718bc6', '#7a6ab0', '#9286b0', '#50658f', '#5a5270', '#768ba5', '#008cd6', '#a0d8f6', '#b5ccd9', '#95a7b0', '#717f85', '#4a5256',
   '#557672', '#448d78', '#729a96', '#56a893', '#5aa572', '#5cc2d0', '#4ea7b4', '#b6cbba', '#d5ebd8', '#a4d6ad', '#96a69a', '#99a47a'],
  ['#b9c66f', '#b7c99a', '#abcd03', '#d8e383', '#5a5746', '#888874', '#b4b19a', '#b5ae7b', '#ddd56a', '#fff577', '#fff9ae', '#fffdd8',
   '#b29873', '#d4955a', '#dab865', '#f08437', '#f7af3c', '#f4ab6c', '#ffd500', '#fdd6a3', '#847350', '#a9593e', '#cc6f2b', '#f1845d',
   '#f6b08d', '#fbdac8', '#ae7e7f', '#cf7069', '#d16f83', '#e60046', '#f1857d', '#ea5568', '#d39a99', '#865d6d', '#ac5c82', '#f5b1d0',
   '#d59bb5', '#af9ca5', '#dabdcb', '#b26895', '#cc4a93', '#cd7bb1', '#b691b3', '#d0a5cd', '#71586e', '#95748f', '#a572b0', '#a4007f'],
  ['#8f3b82', '#7b459a', '#775082', '#683a82', '#000000']
];

function line(svg, x1, y1, x2, y2, cls) {
  const el = document.createElementNS(SVG_NS, 'line');
  el.setAttribute('x1', x1);
  el.setAttribute('y1', y1);
  el.setAttribute('x2', x2);
  el.setAttribute('y2', y2);
  el.setAttribute('class', cls);
  svg.appendChild(el);
}

function label(svg, text, x, y, turned) {
  const el = document.createElementNS(SVG_NS, 'text');
  el.textContent = text;
  el.setAttribute('x', x);
  el.setAttribute('y', y);
  if (turned) el.setAttribute('transform', `rotate(-90 ${x} ${y})`);
  svg.appendChild(el);
}

function tickLength(mm) {
  if (mm % 50 === 0) return 5;
  return mm % 25 === 0 ? 2 : 1;
}

function drawRulerX() {
  const svg = document.getElementById('rulerX');
  const width = svg.clientWidth;
  svg.innerHTML = '';
  for (let mm = -250; ORIGIN_X + mm * PX_PER_MM < width; mm += 5) {
    const x = Math.round(ORIGIN_X + mm * PX_PER_MM) + 0.5;
    line(svg, x, 15 - tickLength(mm), x, 15, 'tick');
    if (mm % 50 === 0 && x > 20 && x < width - 60) label(svg, Math.abs(mm), x, 9);
  }
  label(svg, '毫米', width - 13, 9);
  line(svg, width - 126.5, 0, width - 126.5, 18, 'cursor-mark');
}

function drawRulerY() {
  const svg = document.getElementById('rulerY');
  const height = svg.clientHeight;
  svg.innerHTML = '';
  for (let mm = 330; ORIGIN_Y - mm * PX_PER_MM < height; mm -= 5) {
    const y = Math.round(ORIGIN_Y - mm * PX_PER_MM) + 0.5;
    const end = mm % 25 === 0 ? 15 : 15;
    line(svg, end - tickLength(mm), y, end, y, 'tick');
    if (mm % 50 === 0) label(svg, Math.abs(mm), 9, y, true);
  }
  label(svg, '毫米', 9, height - 14, true);
  line(svg, 0, 420.5, 18, 420.5, 'cursor-mark');
}

function drawSwatches() {
  const box = document.getElementById('swatches');
  colors.forEach((column) => {
    column.forEach((color, i) => {
      const btn = document.createElement('button');
      btn.className = i === 0 ? 'swatch top' : 'swatch';
      btn.setAttribute('aria-label', color);
      if (color === 'none') {
        btn.style.backgroundColor = '#fff';
        btn.innerHTML = '<svg width="15" height="15"><path d="M2 13L13 2" stroke="#d44"/></svg>';
      } else {
        btn.style.backgroundColor = color;
      }
      box.appendChild(btn);
    });
  });
}

function drawRulers() {
  drawRulerX();
  drawRulerY();
}

drawRulers();
drawSwatches();
window.addEventListener('resize', drawRulers);
```
